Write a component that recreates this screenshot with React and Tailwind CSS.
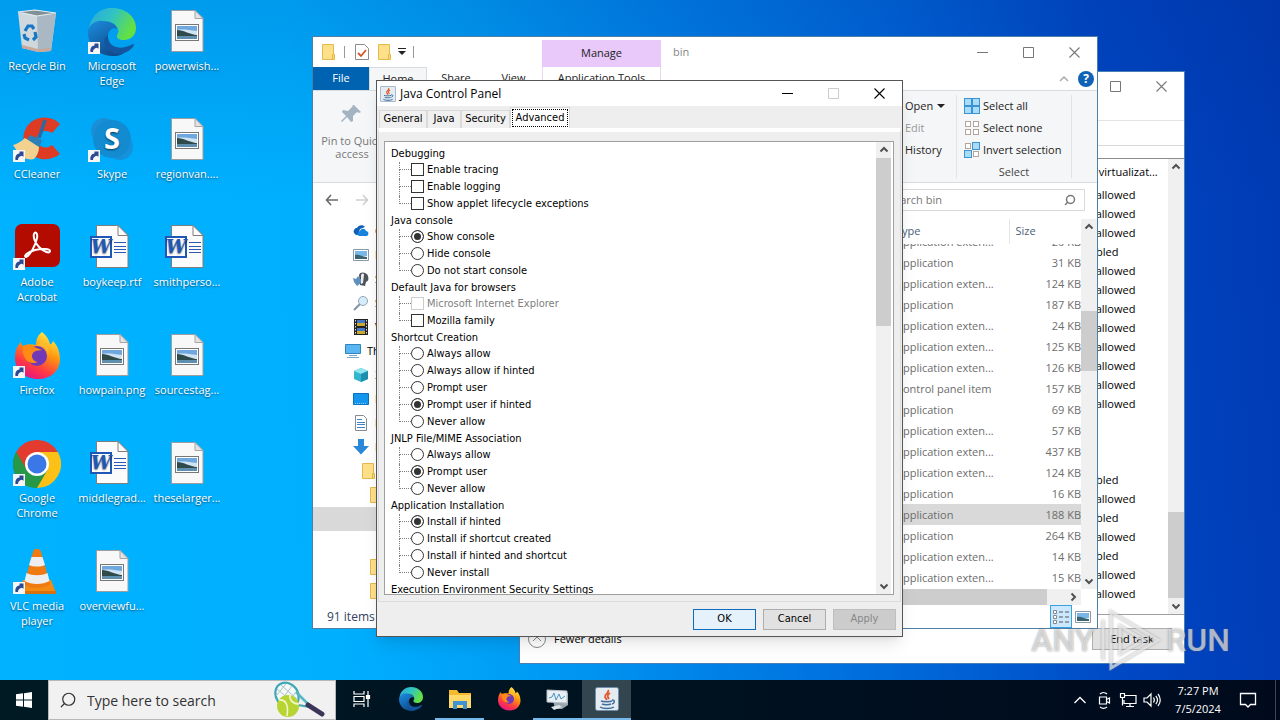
import React from 'react';
import { Search } from 'lucide-react';

const treeGroups = [
  {
    title: 'Debugging',
    type: 'checkbox',
    items: [{ label: 'Enable tracing' }, { label: 'Enable logging' }, { label: 'Show applet lifecycle exceptions' }],
  },
  {
    title: 'Java console',
    type: 'radio',
    items: [{ label: 'Show console', on: true }, { label: 'Hide console' }, { label: 'Do not start console' }],
  },
  {
    title: 'Default Java for browsers',
    type: 'checkbox',
    items: [{ label: 'Microsoft Internet Explorer', disabled: true }, { label: 'Mozilla family' }],
  },
  {
    title: 'Shortcut Creation',
    type: 'radio',
    items: [
      { label: 'Always allow' },
      { label: 'Always allow if hinted' },
      { label: 'Prompt user' },
      { label: 'Prompt user if hinted', on: true },
      { label: 'Never allow' },
    ],
  },
  {
    title: 'JNLP File/MIME Association',
    type: 'radio',
    items: [{ label: 'Always allow' }, { label: 'Prompt user', on: true }, { label: 'Never allow' }],
  },
  {
    title: 'Application Installation',
    type: 'radio',
    items: [
      { label: 'Install if hinted', on: true },
      { label: 'Install if shortcut created' },
      { label: 'Install if hinted and shortcut' },
      { label: 'Never install' },
    ],
  },
  { title: 'Execution Environment Security Settings', type: 'radio', items: [] },
];

const files = [
  ['Application', '31 KB'],
  ['Application exten...', '124 KB'],
  ['Application', '187 KB'],
  ['Application exten...', '24 KB'],
  ['Application exten...', '125 KB'],
  ['Application exten...', '126 KB'],
  ['Control panel item', '157 KB'],
  ['Application', '69 KB'],
  ['Application exten...', '57 KB'],
  ['Application exten...', '437 KB'],
  ['Application exten...', '124 KB'],
  ['Application', '16 KB'],
  ['Application', '188 KB'],
  ['Application', '264 KB'],
  ['Application exten...', '14 KB'],
  ['Application exten...', '15 KB'],
];

const N = 'Not allowed';
const D = 'Disabled';
const uac = [N, N, N, D, N, N, N, N, N, N, N, N, '', '', '', D, N, D, N, D, N, N];

/* ---------- icons ---------- */

const Shortcut = () => (
  <g>
    <rect x="0" y="34" width="12" height="12" fill="#f6f6f6" />
    <path d="M2.5 44c-.6-3.600 1-6.300 4-6.500V35.500h4v5.200L8.800 39.800C6.500 40.300 5 41.600 5 44z" fill="#2a4a94" />
  </g>
);

const RecycleIcon = () => (
  <svg viewBox="0 0 48 48" className="size-12">
    <path d="M5 4 24 7 43 5 38 43 25 44 9 40z" fill="#cfd8dd" />
    <path d="M24 7 43 5 38 43 25 44z" fill="#a9b8c2" />
    <path d="M5 4 22 2 43 5 24 8z" fill="#7f9096" stroke="#e8eef0" strokeWidth="1.200" />
    <path d="m9 37 16 4 13-1-.5 3L25 44 9 40z" fill="#c9a79a" />
    <path d="m12 23 3-5h4l2 3M22 24l1 5-3 3M16 32l-4-2-1-4" fill="none" stroke="#1877c4" strokeWidth="3.200" />
  </svg>
);

const EdgeArt = ({ id }) => (
  <g>
    <defs>
      <linearGradient id={id + 'a'} x1="0" y1="0" x2="1" y2="0.4">
        <stop offset="0" stopColor="#2aa7de" />
        <stop offset=".5" stopColor="#30c3c4" />
        <stop offset="1" stopColor="#63e043" />
      </linearGradient>
      <linearGradient id={id + 'b'} x1="0" y1="0" x2="0.6" y2="1">
        <stop offset="0" stopColor="#1a8ee0" />
        <stop offset="1" stopColor="#114a8b" />
      </linearGradient>
    </defs>
    <path d="M1 22C2 8 12 0 24 0c14 0 24 9 24 20 0 8-6 12-12 12-5 0-8-2-7-5 1-2 2-3 1-6-2-6-9-8-15-7C8 15 3 18 1 22z" fill={'url(#' + id + 'a)'} />
    <path d="M0 24C1 16 8 12 15 13c7 0 13 3 14 8-4-2-8 1-9 6-1 9 6 17 16 18-4 3-8 3-12 3C9 47 0 37 0 24z" fill={'url(#' + id + 'b)'} />
    <path d="M20 27c-1 11 10 17 25 9 2 0 0 3-1 4-9 9-21 7-26-1-3-5-2-10 2-12z" fill="#14559f" />
  </g>
);

const EdgeIcon = () => (
  <svg viewBox="0 0 48 48" className="size-12">
    <EdgeArt id="edge" />
    <Shortcut />
  </svg>
);

const ImageFileIcon = () => (
  <svg viewBox="0 0 48 48" className="size-12">
    <path d="M8.500 2.500H32l8 8V43.500H8.500z" fill="#f8f8f8" stroke="#9d9d9d" />
    <path d="M32 2.500v8h8z" fill="#e3e3e3" stroke="#a5a5a5" />
    <rect x="12.500" y="16.500" width="23" height="16" fill="#fff" stroke="#777" />
    <rect x="14" y="18" width="20" height="7" fill="#6fa8de" />
    <path d="M14 22c5-1 12 0 20 1v3H14z" fill="#cfe3f4" />
    <path d="M14 22c7 0 11 4 20 5v2H14z" fill="#2f4a4b" />
    <rect x="14" y="28" width="20" height="3" fill="#5f8fae" />
  </svg>
);

const WordIcon = () => (
  <svg viewBox="0 0 48 48" className="size-12">
    <path d="M8.500 1.500H30l10 10V43.500H8.500z" fill="#fbfbfb" stroke="#7d7d7d" />
    <path d="M30 1.500v10h10z" fill="#fff" stroke="#7d7d7d" />
    <path d="M26 18.500h12M26 22.500h12M26 25.500h12M26 28.500h12" stroke="#2b5ab0" />
    <rect x="3" y="13" width="20" height="20" fill="#fff" stroke="#1f57b5" strokeWidth="2" />
    <text x="13" y="29" textAnchor="middle" fontSize="18" fontWeight="bold" fontStyle="italic" fontFamily="DejaVu Serif, serif" fill="#1f57b5">
      W
    </text>
  </svg>
);

const CCleanerIcon = () => (
  <svg viewBox="0 0 48 48" className="size-12">
    <path d="M47 8C37-2 20 0 13 12 6 25 14 40 28 43c7 1 14-1 19-5l-8-9c-6 5-14 2-15-5-1-7 7-12 15-7z" fill="#dd3b24" />
    <path d="M32 4 26 22" stroke="#2d6aa5" strokeWidth="3.500" />
    <path d="m17 19 12 5-3 8-14-5z" fill="#2d7fb8" />
    <path d="M12 22c-3 3-8 6-12 7l8 12c5 2 10 3 13 2 3-3 5-7 5-12z" fill="#f3d290" />
    <Shortcut />
  </svg>
);

const SkypeIcon = () => (
  <svg viewBox="0 0 48 48" className="size-12">
    <circle cx="16" cy="15" r="13" fill="#1a8ed6" />
    <circle cx="32" cy="31" r="13" fill="#1692dc" />
    <circle cx="24" cy="23" r="19" fill="#138bd0" />
    <text x="24" y="33" textAnchor="middle" fontSize="29" fontWeight="bold" fontFamily="Open Sans, sans-serif" fill="#fff">
      S
    </text>
    <Shortcut />
  </svg>
);

const AcrobatIcon = () => (
  <svg viewBox="0 0 48 48" className="size-12">
    <rect x="2" y="0" width="45" height="43" rx="7" fill="#b30b00" />
    <path
      d="M13 33c-3-1 2-5 9-7 8-2 15-1 15 1 0 3-6 1-11-4-4-4-6-10-5-13 1-3 4-1 3 4-1 6-7 18-11 19z"
      fill="none"
      stroke="#fff"
      strokeWidth="2"
    />
    <Shortcut />
  </svg>
);

const FirefoxArt = ({ id }) => (
  <g>
    <defs>
      <linearGradient id={id} x1=".8" y1="0" x2=".3" y2="1">
        <stop offset="0" stopColor="#fff44f" />
        <stop offset=".4" stopColor="#ff980e" />
        <stop offset=".75" stopColor="#ff3647" />
        <stop offset="1" stopColor="#e31587" />
      </linearGradient>
    </defs>
    <path d="M29 0c5 4 7 8 8 12 2 1 2-2 3-3 5 5 7 12 7 18 0 12-9 20-22 20C12 47 2 38 2 26c0-7 2-12 6-16 0 2 1 3 2 4 4-2 8-2 13-1 0-6 2-10 6-13z" fill={'url(#' + id + ')'} />
    <circle cx="24" cy="24" r="10" fill="#7139b8" />
    <path d="M10 14c4-2 8-1 11 1l8 3c-4 1-7 0-9 3-3 4 1 9 5 9-8 4-17-3-15-16z" fill="#ff8b16" />
    <path d="M24 14c6-1 11 3 11 10 2-8-2-13-7-15z" fill="#ffb92e" />
  </g>
);

const FirefoxIcon = () => (
  <svg viewBox="0 0 48 48" className="size-12">
    <FirefoxArt id="ffx" />
    <Shortcut />
  </svg>
);

const ChromeIcon = () => (
  <svg viewBox="0 0 48 48" className="size-12">
    <path d="M24 24 3.200 12a24 24 0 0 1 41.600 0z" fill="#e33b2e" />
    <path d="M24 24 44.800 12A24 24 0 0 1 24 48z" fill="#fbc116" />
    <path d="M24 24 24 48A24 24 0 0 1 3.200 12z" fill="#279847" />
    <path d="M24 12h20.800L34.500 30z" fill="#fbc116" />
    <path d="M3.200 12 13.500 30 24 12z" fill="#e33b2e" />
    <path d="M3.200 12 14 30 34.500 30 24 48A24 24 0 0 1 3.200 12z" fill="#279847" />
    <circle cx="24" cy="24" r="12" fill="#fff" />
    <circle cx="24" cy="24" r="9.500" fill="#3b78e7" />
    <Shortcut />
  </svg>
);

const VlcIcon = () => (
  <svg viewBox="0 0 48 48" className="size-12">
    <path d="M10 32h28l5 13H7z" fill="#f28a13" />
    <path d="M24 1c2 0 3 0 4 3l9 32c-4 5-22 5-26 0l9-32c1-3 2-3 4-3z" fill="#ef7a12" />
    <path d="M18.500 9h11l2.500 8c-4 2-12 2-16 0z" fill="#eee" />
    <path d="M13.500 25c6 3 15 3 21 0l2 8c-7 4-18 4-25 0z" fill="#eee" />
    <path d="M7 43h36v3H7z" fill="#d8700b" />
    <Shortcut />
  </svg>
);

const JavaIcon = ({ className }) => (
  <svg viewBox="0 0 24 24" className={className}>
    <rect x=".5" y=".5" width="23" height="23" rx="2" fill="#e4ebf1" stroke="#6f8fab" />
    <path d="M13 3c2 3-4 4-3 7l2 3M15 6c-3 2-3 3-1 6" fill="none" stroke="#e5562a" strokeWidth="1.800" />
    <path d="M6 14c2 1 9 1 11 0M7 17c2 1 7 1 9 0M5 20c3 2 11 2 14 0M17 13c3 0 3 3 0 4" fill="none" stroke="#3e6f9e" strokeWidth="1.500" />
  </svg>
);

const FolderIcon = () => (
  <svg viewBox="0 0 16 16" className="size-4 shrink-0">
    <path d="M1.500.500h11v15h-11z" fill="#ffe08a" stroke="#e3bb4c" />
    <path d="M11.500 10.500h2v5h-2z" fill="#ffd766" stroke="#e3bb4c" />
  </svg>
);

const NavIcon = ({ kind }) => (
  <svg viewBox="0 0 16 16" className="size-4 shrink-0">
    {kind === 'cloud' && (
      <g>
        <path d="M1 10c-1-3 1-5 3-5 1-3 6-4 8-1l-5 2-2 6H3z" fill="#0f5fb8" />
        <path d="M6 13c-2-1-2-4 1-5 1-3 5-3 6 0 3 0 3 4 1 5z" fill="#1683dd" />
      </g>
    )}
    {kind === 'picture' && (
      <g>
        <path d="M.500 2.500h15v11H.500z" fill="#fff" stroke="#8a98a5" />
        <path d="M2 4h12v5H2z" fill="#79b7e8" />
        <path d="M2 8c4-1 7 2 12 2v2H2z" fill="#3b6472" />
      </g>
    )}
    {kind === 'games' && (
      <g>
        <path d="M6 4c1-4 8-3 9 1s0 5-2 6l-1 4-5-1z" fill="#4c545a" />
        <path d="M0 7l3 1 2-3 2 3 3 0-2 4-4 3-3-4z" fill="#5f8fbf" />
        <path d="M8 4c1-2 3-2 3 0l-1 8-2 1z" fill="#e9ecee" />
      </g>
    )}
    {kind === 'search' && (
      <g>
        <path d="M1 15l6-6" stroke="#8193a5" strokeWidth="2" />
        <circle cx="10" cy="6" r="4.500" fill="#d7ecfb" stroke="#93a4b4" />
      </g>
    )}
    {kind === 'video' && (
      <g>
        <path d="M1 0h14v16H1z" fill="#222" />
        <path d="M4 1h8v6H4zM4 9h8v6H4z" fill="#4577c8" />
        <path d="M4 4h8v3H4zM4 12h8v3H4z" fill="#c9a82c" />
        <path d="M2.500 1v14M13.500 1v14" stroke="#ddd" strokeDasharray="1.500 1.500" />
      </g>
    )}
    {kind === 'pc' && (
      <g>
        <path d="M.500 1.500h15v9H.500z" fill="#5ab6f3" stroke="#3282bd" />
        <path d="M4 12.500h8M2 14.500h12" stroke="#7ba5c5" />
      </g>
    )}
    {kind === 'cube' && (
      <g>
        <path d="M8 1l7 3v8l-7 3-7-3V4z" fill="#32b6cf" />
        <path d="M8 1l7 3-7 3-7-3z" fill="#8fe6ef" />
        <path d="M8 7l7-3v8l-7 3z" fill="#1c8fae" />
      </g>
    )}
    {kind === 'desktop' && (
      <g>
        <path d="M.500 2.500h15v11H.500z" fill="#1296ee" stroke="#0b70bd" />
        <path d="M2 12.500h12" stroke="#8bd0ff" strokeDasharray="1 1" />
      </g>
    )}
    {kind === 'doc' && (
      <g>
        <path d="M2.500.500h8l3 3v12h-11z" fill="#fff" stroke="#848c93" />
        <path d="M4 4.500h5M4 7.500h8M4 9.500h8M4 12.500h8" stroke="#3c84c6" />
      </g>
    )}
    {kind === 'download' && <path d="M5 0h6v7h5l-8 8.500L0 7h5z" fill="#2b88d9" />}
  </svg>
);

const WinButtons = ({ dark, noMin, muted }) => (
  <div className={'flex h-full items-center ' + (dark ? 'text-black' : 'text-[#777]')}>
    {!noMin && (
      <button aria-label="Minimize" className="flex w-[46px] justify-center">
        <svg viewBox="0 0 11 11" className="size-[11px]"><path d="M0 5.500h11" stroke="currentColor" /></svg>
      </button>
    )}
    <button aria-label="Maximize" className={'flex w-[46px] justify-center ' + (muted ? 'text-[#ccc]' : '')}>
      <svg viewBox="0 0 11 11" className="size-[11px]"><path d="M.500.500h10v10H.500z" fill="none" stroke="currentColor" /></svg>
    </button>
    <button aria-label="Close" className="flex w-[46px] justify-center">
      <svg viewBox="0 0 11 11" className="size-[11px]"><path d="M.500.500l10 10M10.500.500l-10 10" stroke="currentColor" strokeWidth="1.100" /></svg>
    </button>
  </div>
);

const Arrow = ({ turn = '' }) => (
  <svg viewBox="0 0 16 16" className={'size-4 shrink-0 ' + turn}>
    <path d="M4.500 9.500 8 6l3.500 3.500" fill="none" stroke="#505050" strokeWidth="2" />
  </svg>
);

/* ---------- desktop ---------- */

const shortcuts = [
  ['Recycle Bin', RecycleIcon],
  ['CCleaner', CCleanerIcon],
  ['Adobe Acrobat', AcrobatIcon],
  ['Firefox', FirefoxIcon],
  ['Google Chrome', ChromeIcon],
  ['VLC media player', VlcIcon],
  ['Microsoft Edge', EdgeIcon],
  ['Skype', SkypeIcon],
  ['boykeep.rtf', WordIcon],
  ['howpain.png', ImageFileIcon],
  ['middlegrad...', WordIcon],
  ['overviewfu...', ImageFileIcon],
  ['powerwish...', ImageFileIcon],
  ['regionvan....', ImageFileIcon],
  ['smithperso...', WordIcon],
  ['sourcestag...', ImageFileIcon],
  ['theselarger...', ImageFileIcon],
];

const DesktopIcons = () => (
  <ul className="grid w-fit grid-flow-col grid-cols-[repeat(3,75px)] grid-rows-[repeat(6,108px)]">
    {shortcuts.map(([name, Icon]) => (
      <li key={name} className="flex flex-col items-center pt-2 pr-px text-center text-[11px] leading-[15px] text-white [text-shadow:0_1px_2px_rgba(0,0,0,0.6)]">
        <Icon />
        <span className="mt-0.5 px-1">{name}</span>
      </li>
    ))}
  </ul>
);

/* ---------- task manager ---------- */

const TaskManager = () => (
  <section className="absolute top-[71px] right-[95px] bottom-4 left-[519px] flex flex-col border border-[#4a7fb5] bg-white text-[11px] text-black">
    <div className="flex h-[29px] shrink-0 justify-end">
      <WinButtons />
    </div>
    <div className="h-5 shrink-0 border-b border-[#e4e4e4]" />
    <div className="h-[25px] shrink-0 border-b border-[#d9d9d9]" />
    <div className="h-[13px] shrink-0 border-b border-[#8c8c8c]" />
    <div className="flex min-h-0 flex-1 justify-end overflow-hidden border-b border-[#a0a0a0]">
      <table className="h-fit">
        <thead>
          <tr><th className="h-[26px] p-0 text-left font-normal">UAC virtualizat...</th></tr>
        </thead>
        <tbody>
          {uac.map((v, i) => (
            <tr key={i}><td className="h-[19px] w-[94px] p-0 leading-[19px]">{v}</td></tr>
          ))}
        </tbody>
      </table>
      <div className="flex w-4 flex-col bg-[#f0f0f0]">
        <Arrow />
        <div className="flex-1" />
        <div className="h-[86px] bg-[#cdcdcd]" />
        <Arrow turn="rotate-180" />
      </div>
    </div>
    <div className="flex h-12 shrink-0 items-center justify-between pr-3 pl-2">
      <button className="flex items-center gap-2">
        <svg viewBox="0 0 18 18" className="size-[18px]">
          <circle cx="9" cy="9" r="8.500" fill="none" stroke="#888" />
          <path d="M5 11l4-4 4 4" fill="none" stroke="#888" />
        </svg>
        Fewer details
      </button>
      <button className="h-[22px] w-20 border border-[#adadad] bg-[#e1e1e1]">End task</button>
    </div>
  </section>
);

/* ---------- file explorer ---------- */

const nav = [
  ['cloud', 'OneDrive', 'pl-10'],
  ['picture', 'Pictures', 'pl-10'],
  ['games', 'Saved Games', 'pl-10'],
  ['search', 'Searches', 'pl-10'],
  ['video', 'Videos', 'pl-10'],
  ['pc', 'This PC', 'pl-8'],
  ['cube', '3D Objects', 'pl-10'],
  ['desktop', 'Desktop', 'pl-10'],
  ['doc', 'Documents', 'pl-10'],
  ['download', 'Downloads', 'pl-10'],
  ['folder', '', 'pl-12'],
  ['folder', '', 'pl-14'],
  ['', '', 'bg-[#d9d9d9]'],
  ['', '', ''],
  ['folder', '', 'pl-14'],
  ['folder', '', 'pl-14'],
];

const SelectIcon = ({ on }) => (
  <svg viewBox="0 0 16 16" className="size-4">
    {[[0, 0], [8, 0], [0, 8], [8, 8]].map(([x, y], i) =>
      on[i] ? (
        <rect key={i} x={x + 0.5} y={y + 0.5} width="7" height="7" fill="#a9dcfb" stroke="#3c93d2" />
      ) : (
        <rect key={i} x={x + 1.5} y={y + 1.5} width="5" height="5" fill="#fff" stroke="#b3a49c" />
      )
    )}
  </svg>
);

const Explorer = () => (
  <section className="absolute top-9 right-[182px] bottom-[51px] left-[312px] flex flex-col border border-[#4c7fa8] bg-white text-[11px] text-[#222]">
    <header className="flex h-[30px] shrink-0 items-center">
      <div className="flex w-[229px] items-center pl-2">
        <FolderIcon />
        <span className="ml-[7px] h-3 w-px bg-[#999]" />
        <svg viewBox="0 0 14 16" className="ml-2.5 h-4 w-3.5">
          <path d="M.500.500h9l4 4v11H.500z" fill="#fff" stroke="#8c8c8c" />
          <path d="M3 9l3 3 5-6" fill="none" stroke="#d4552c" strokeWidth="1.800" />
        </svg>
        <span className="ml-2"><FolderIcon /></span>
        <svg viewBox="0 0 8 8" className="ml-[5px] size-2"><path d="M0 .500h8" stroke="#222" /><path d="M0 3h8L4 7z" fill="#222" /></svg>
        <span className="ml-[7px] h-3 w-px bg-[#999]" />
      </div>
      <div className="flex h-[27px] w-[119px] items-center justify-center self-end bg-[#e8c9f9]">Manage</div>
      <span className="ml-3 text-[#888]">bin</span>
      <div className="ml-auto h-full"><WinButtons /></div>
    </header>
    <div className="flex h-6 shrink-0 items-center border-b border-[#dadbdc]">
      <button className="h-full w-14 bg-[#0063b1] text-white">File</button>
      <button className="h-full w-[58px] border border-b-0 border-[#dadbdc] bg-[#f5f6f7]">Home</button>
      <button className="h-full w-[58px]">Share</button>
      <button className="h-full w-[57px]">View</button>
      <button className="h-full w-[119px] border-x border-[#e8d5f2]">Application Tools</button>
      <span className="ml-auto pr-1"><svg viewBox="0 0 16 16" className="size-4"><path d="M4 10l4-4 4 4" fill="none" stroke="#aaa" strokeWidth="1.500" /></svg></span>
      <button aria-label="Help" className="mr-[3px] ml-0.5 size-4 rounded-full bg-[#0f62b5] text-[12px] leading-4 font-bold text-white">?</button>
    </div>
    <div className="flex h-[92px] shrink-0 border-b border-[#dadbdc] bg-[#f5f6f7]">
      <button className="flex w-[78px] flex-col items-center pt-[11px] leading-[13px] text-[#777]">
        <svg viewBox="0 0 24 24" className="mb-2 size-6">
          <path d="M14 3l7 7-2 1-2-1-4 4 0 5-2 1-4-5-5 5-1-1 5-5-4-4 1-2 5 1 5-5-1-1z" fill="#a3b3c2" />
        </svg>
        Pin to Quick access
      </button>
      <div className="ml-auto flex w-[75px] flex-col pt-1 leading-[22px]">
        <button className="flex items-center gap-1 pl-6">Open <span className="border-x-4 border-t-4 border-x-transparent border-t-[#222]" /></button>
        <button className="pl-6 text-left text-[#999]">Edit</button>
        <button className="pl-6 text-left">History</button>
      </div>
      <div className="my-1 w-[116px] border-x border-[#e2e3e4] px-[7px] leading-[22px]">
        <button className="flex items-center gap-[3px] whitespace-nowrap"><SelectIcon on={[1, 1, 1, 1]} />Select all</button>
        <button className="flex items-center gap-[3px] whitespace-nowrap"><SelectIcon on={[0, 0, 0, 0]} />Select none</button>
        <button className="flex items-center gap-[3px] whitespace-nowrap"><SelectIcon on={[0, 1, 1, 0]} />Invert selection</button>
        <div className="text-center text-[#444]">Select</div>
      </div>
      <div className="w-[25px]" />
    </div>
    <div className="flex h-[34px] shrink-0 items-center pl-3 text-[#777]">
      <svg viewBox="0 0 14 12" className="h-3 w-3.5"><path d="M6 1L1.500 6 6 11M1.500 6H13" fill="none" stroke="#6b6b6b" strokeWidth="1.600" /></svg>
      <svg viewBox="0 0 14 12" className="ml-4 h-3 w-3.5"><path d="M8 1l4.500 5L8 11M12.500 6H1" fill="none" stroke="#d0d0d0" strokeWidth="1.600" /></svg>
      <label className="mr-3 ml-auto flex h-[22px] w-[206px] items-center border border-[#d9d9d9] px-2">
        <input aria-label="Search bin" placeholder="Search bin" className="w-full min-w-0 outline-none placeholder:text-[#777]" />
        <Search className="size-3 shrink-0 -scale-x-100" strokeWidth={3} />
      </label>
    </div>
    <div className="flex min-h-0 flex-1 pt-0.5">
      <ul className="w-[180px] overflow-hidden">
        {nav.map(([kind, label, pad], i) => (
          <li key={i} className={'flex h-6 items-center gap-1.5 whitespace-nowrap text-black ' + pad}>
            {kind === 'folder' ? <FolderIcon /> : kind && <NavIcon kind={kind} />}
            {label}
          </li>
        ))}
      </ul>
      <div className="flex min-w-0 flex-1 flex-col">
        <div className="min-h-0 flex-1 overflow-hidden">
          <table className="w-full table-fixed text-[#6d6d6d]">
            <colgroup>
              <col />
              <col className="w-[117px]" />
              <col className="w-[72px]" />
            </colgroup>
            <thead>
              <tr className="h-[25px] text-left text-[#4c607a]">
                <th className="p-0" />
                <th className="border-r border-[#e5e5e5] p-0 pl-1 font-normal">Type</th>
                <th className="p-0 pl-1.5 font-normal">Size</th>
              </tr>
            </thead>
            <tbody>
              <tr>
                <td className="p-0" />
                <td className="p-0 pl-1"><div className="flex h-2 items-end overflow-hidden leading-[21px]">Application exten...</div></td>
                <td className="p-0"><div className="flex h-2 items-end justify-end overflow-hidden leading-[21px]">20 KB</div></td>
              </tr>
              {files.map(([type, size], i) => (
                <tr key={i} className={i === 12 ? 'bg-[#d9d9d9]' : ''}>
                  <td className="h-[21px] p-0" />
                  <td className="h-[21px] p-0 pl-1 leading-[21px] whitespace-nowrap">{type}</td>
                  <td className="h-[21px] p-0 text-right leading-[21px]">{size}</td>
                </tr>
              ))}
            </tbody>
          </table>
        </div>
        <div className="flex h-4 shrink-0 bg-[#f0f0f0]">
          <div className="flex-1 bg-[#cdcdcd]" />
          <div className="w-[18px]" />
          <Arrow turn="rotate-90" />
        </div>
      </div>
      <div className="mb-4 flex w-4 flex-col bg-[#f0f0f0]">
        <Arrow />
        <div className="h-[76px]" />
        <div className="h-[60px] bg-[#cdcdcd]" />
        <div className="flex-1" />
        <Arrow turn="rotate-180" />
      </div>
    </div>
    <footer className="flex h-[23px] shrink-0 items-center pr-2 pl-3.5 text-[12px] text-[#333f5f]">
      91 items
      <button aria-label="Details" className="ml-auto flex h-full w-[22px] items-center justify-center border border-[#3ba0e0] bg-[#cce8ff]">
        <svg viewBox="0 0 16 14" className="h-3.5 w-4">
          <path d="M.500.500h3v3h-3zM.500 5.500h3v3h-3zM.500 10.500h3v3h-3z" fill="#fff" stroke="#888" />
          <path d="M6 2h4m2 0h4M6 7h4m2 0h4M6 12h4m2 0h4" stroke="#555" />
        </svg>
      </button>
      <button aria-label="Large icons" className="ml-[3px] flex size-[14px] items-center"><NavIcon kind="picture" /></button>
    </footer>
  </section>
);

/* ---------- java control panel ---------- */

const TreeItem = ({ type, item, name, last }) => (
  <li className="flex h-[17px] items-center pl-2">
    <span className="flex w-3 flex-col self-stretch">
      <span className="h-2 border-b border-l border-dotted border-[#808080]" />
      {!last && <span className="flex-1 border-l border-dotted border-[#808080]" />}
    </span>
    <label className={'flex items-center gap-[3px] ' + (item.disabled ? 'text-[#808080]' : '')}>
      {type === 'radio' ? (
        <input
          type="radio"
          name={name}
          defaultChecked={item.on}
          className="mb-0.5 size-[13px] appearance-none rounded-full border border-[#333] bg-white checked:border-[#333] checked:bg-[#333] checked:shadow-[inset_0_0_0_2px_#fff]"
        />
      ) : (
        <input
          type="checkbox"
          disabled={item.disabled}
          className="mb-0.5 size-[13px] appearance-none border border-[#333] bg-white disabled:border-[#ccc]"
        />
      )}
      {item.label}
    </label>
  </li>
);

const Tab = ({ children, wide }) => (
  <button className={'h-[18px] border border-b-0 border-[#d9d9d9] bg-[#f0f0f0] text-center ' + wide}>{children}</button>
);

const JavaPanel = () => (
  <section className="absolute top-20 right-[377px] bottom-[43px] left-[376px] flex flex-col border border-[#555] bg-[#eee] text-[11px] text-black shadow-lg font-['DejaVu_Sans_Condensed','DejaVu_Sans',sans-serif]">
    <header className="flex h-[25px] shrink-0 items-center bg-white pl-[3px]">
      <JavaIcon className="size-4" />
      <h1 className="ml-1 font-['Open_Sans',sans-serif] text-[12px]">Java Control Panel</h1>
      <div className="ml-auto h-full"><WinButtons dark muted /></div>
    </header>
    <div className="flex h-[22px] shrink-0 items-end pl-0.5">
      <Tab wide="w-12">General</Tab>
      <Tab wide="w-[34px]">Java</Tab>
      <Tab wide="w-[49px]">Security</Tab>
      <button className="h-[21px] w-[60px] border border-b-0 border-[#d9d9d9] bg-white p-px">
        <span className="flex h-full items-center justify-center border border-dotted border-black">Advanced</span>
      </button>
    </div>
    <div className="mx-px flex min-h-0 flex-1 flex-col border-x border-b border-[#dcdcdc] border-t-4 border-t-white pt-[9px] pr-1.5 pb-1.5 pl-[5px]">
      <div className="flex min-h-0 flex-1 border border-[#a0a0a0] bg-white pr-0.5">
        <div className="min-h-0 flex-1 overflow-hidden pt-1 pl-1.5">
          {treeGroups.map((g) => (
            <div key={g.title}>
              <h2 className="h-4 leading-4">{g.title}</h2>
              <ul>
                {g.items.map((item, i) => (
                  <TreeItem key={item.label} type={g.type} item={item} name={g.title} last={i === g.items.length - 1} />
                ))}
              </ul>
            </div>
          ))}
        </div>
        <div className="flex w-[15px] flex-col items-center bg-[#f0f0f0]">
          <Arrow />
          <div className="h-[168px] w-full bg-[#cdcdcd]" />
          <div className="flex-1" />
          <Arrow turn="rotate-180" />
        </div>
      </div>
    </div>
    <footer className="flex shrink-0 justify-end gap-[7px] px-1.5 pt-[7px] pb-1.5">
      <button className="h-[21px] w-[63px] border border-[#0f6cbd] bg-[#e5f1fb]">OK</button>
      <button className="h-[21px] w-[63px] border border-[#adadad] bg-[#e1e1e1]">Cancel</button>
      <button disabled className="h-[21px] w-[63px] border border-[#bfbfbf] bg-[#ccc] text-[#888]">Apply</button>
    </footer>
  </section>
);

/* ---------- taskbar ---------- */

const TaskButton = ({ label, children, state = '' }) => (
  <button aria-label={label} className={'flex h-10 items-center justify-center border-b-2 ' + (state || 'border-transparent')}>
    {children}
  </button>
);

const Taskbar = () => (
  <footer className="flex h-10 shrink-0 items-center bg-gradient-to-r from-[#001a24] to-[#000a1c] text-white">
    <button aria-label="Start" className="flex w-12 justify-center">
      <svg viewBox="0 0 16 16" className="size-4"><path d="M0 2.300l7-1v6.200H0zM8 1.200L16 0v7.500H8zM0 8.500h7v6.200l-7-1zM8 8.500h8V16l-8-1.200z" fill="#fff" /></svg>
    </button>
    <label className="flex h-10 w-72 items-center border border-[#b8b8b8] bg-[#f1f1f1] pl-2.5 text-[#333]">
      <Search className="size-[18px] shrink-0 -scale-x-100" strokeWidth={1.6} />
      <input aria-label="Type here to search" placeholder="Type here to search" className="ml-2.5 w-0 flex-1 text-[14px] outline-none placeholder:text-[#333]" />
      <svg viewBox="0 0 56 40" className="mr-2 h-10 w-14 shrink-0">
        <path d="M27 25L39 27" stroke="#3fa7b5" strokeWidth="2" />
        <ellipse cx="16" cy="15" rx="11" ry="13" transform="rotate(-35 16 15)" fill="#f4f8f8" stroke="#3fa7b5" strokeWidth="2.200" />
        <path d="M6 9l18 15M10 5l17 15M5 16l10-12M9 22l12-16M15 25l10-13" stroke="#a9c3c9" />
        <path d="M25 12l14 14" stroke="#54b8c4" strokeWidth="2.500" />
        <path d="M37 25l14 9" stroke="#3b3657" strokeWidth="5" strokeLinecap="round" />
        <circle cx="17" cy="26" r="11" fill="#b7d433" />
        <path d="M8 20c6-1 10 4 8 16M19 15c-1 5 3 9 9 9" fill="none" stroke="#f2f7c8" strokeWidth="1.600" />
      </svg>
    </label>
    <div className="grid grid-flow-col auto-cols-[49px] pl-px">
      <TaskButton label="Task View">
        <svg viewBox="0 0 18 18" className="size-[18px]" fill="none" stroke="#fff" strokeWidth="1.200">
          <path d="M1 1v3h10V1M1 6.500h10v5H1zM1 17v-3h10v3M15 1v16" />
          <path d="M13.500 5.500h3v3h-3z" fill="#fff" />
        </svg>
      </TaskButton>
      <TaskButton label="Edge"><svg viewBox="0 0 48 48" className="size-6"><EdgeArt id="tb" /></svg></TaskButton>
      <TaskButton label="File Explorer" state="border-[#76b9ed]">
        <svg viewBox="0 0 24 24" className="size-6">
          <path d="M1 3h8l2 3h12v15H1z" fill="#f5b92f" />
          <path d="M1 8h22v13H1z" fill="#ffd868" />
          <path d="M5 22v-8h14v8h-4v-4H9v4z" fill="#3f93d2" />
        </svg>
      </TaskButton>
      <TaskButton label="Firefox"><svg viewBox="0 0 48 48" className="size-6"><FirefoxArt id="tbf" /></svg></TaskButton>
      <TaskButton label="Task Manager" state="border-[#76b9ed]">
        <svg viewBox="0 0 24 24" className="size-6">
          <path d="M5 5l17 1v12l-6 4H9z" fill="#9aa6b0" />
          <path d="M1 3l20 1v12L1 15z" fill="#e9eef2" stroke="#b7c0c8" />
          <path d="M3 11l3-1 2-4 2 7 3-6 2 5 4-3" fill="none" stroke="#4a94c4" />
          <path d="M5 20l8-2 3 2-8 3z" fill="#dde3e8" />
        </svg>
      </TaskButton>
      <TaskButton label="Java Control Panel" state="border-[#76b9ed] bg-[#33454f]"><JavaIcon className="size-6" /></TaskButton>
    </div>
    <div className="ml-auto flex items-center gap-1.5 text-[11px]">
      <svg viewBox="0 0 18 18" className="size-[18px]" fill="none" stroke="#fff" strokeWidth="1.300"><path d="M3.500 12L9 6.500l5.500 5.500" /></svg>
      <svg viewBox="0 0 18 18" className="size-[18px]" fill="none" stroke="#fff" strokeWidth="1.200">
        <path d="M4.500 6h7v7h-7zM11.500 8.500l3-1.500v5l-3-1.500M5 3c2-2 5-2 7 0M5 16c2 1.500 5 1.500 7 0" />
      </svg>
      <svg viewBox="0 0 18 18" className="size-[18px]" fill="none" stroke="#fff" strokeWidth="1.200">
        <path d="M6 4.500h11v8H5V9M11 12.500v3M7 15.500h8M1.500 2.500h4v4h-4zM3.500 6.500v8" />
      </svg>
      <svg viewBox="0 0 18 18" className="size-[18px]" fill="none" stroke="#fff" strokeWidth="1.200">
        <path d="M1 7h3l4-4v12l-4-4H1zM10.500 6.500c1 1.500 1 3.500 0 5M12.800 4.800c2 2.500 2 6 0 8.400M15 3c3 3.500 3 8.500 0 12" />
      </svg>
      <time className="ml-1 w-[54px] text-center leading-[18px] whitespace-nowrap">7:27 PM<br />7/5/2024</time>
      <svg viewBox="0 0 18 18" className="ml-2 size-[18px]" fill="none" stroke="#fff" strokeWidth="1.300"><path d="M1.500 2.500h15v11h-5L9 16l-2.500-2.500h-5z" /></svg>
      <span className="mr-1 ml-3 h-10 w-px bg-[#3a4656]" />
    </div>
  </footer>
);

const Watermark = () => (
  <div className="pointer-events-none absolute right-[50px] bottom-2 flex items-center font-['Roboto',sans-serif] text-[32px] leading-none font-medium text-white/60 [text-shadow:0_0_2px_rgba(90,90,90,0.7)]">
    ANY
    <svg viewBox="0 0 64 64" className="mx-1 size-16 drop-shadow-[0_0_1px_#777]" fill="none" stroke="#fff" strokeOpacity=".6" strokeWidth="3">
      <path d="M13 4L60 32 13 60z" />
      <path d="M22 18L46 32 22 46z" />
      <path d="M5 12v40" />
    </svg>
    RUN
  </div>
);

export default function App() {
  return (
    <div className="flex h-screen flex-col overflow-hidden font-['Open_Sans',sans-serif]">
      <main className="relative min-h-0 flex-1 bg-[linear-gradient(to_bottom,rgba(0,40,140,0.16),transparent_30%),linear-gradient(86deg,#00b2ff_0%,#00b0ff_25%,#009cf4_40%,#007fe6_55%,#0066d8_70%,#0046c2_86%,#003ab2_100%)]">
        <DesktopIcons />
        <TaskManager />
        <Explorer />
        <JavaPanel />
        <Watermark />
      </main>
      <Taskbar />
    </div>
  );
}
